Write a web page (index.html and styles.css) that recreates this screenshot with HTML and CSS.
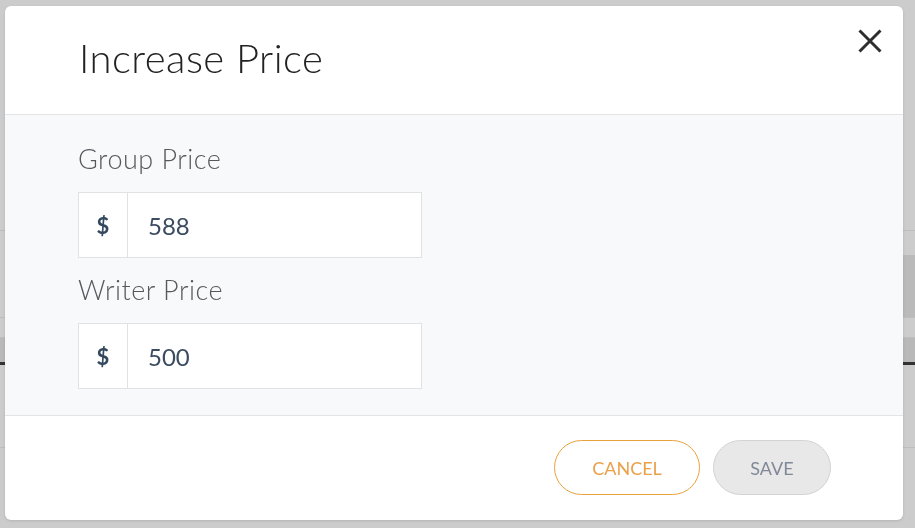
FILE: index.html
```html
<!DOCTYPE html>
<html lang="en">
<head>
<meta charset="utf-8">
<title>Increase Price</title>
<link rel="stylesheet" href="styles.css">
</head>
<body>
<div class="page">
  <div class="pg-gap pg-gap-a"></div>
  <div class="pg-line"></div>
  <div class="pg-gap pg-gap-b"></div>
  <div class="pg-row pg-row-tall"><div class="pg-cell-dark"></div></div>
  <div class="pg-line"></div>
  <div class="pg-gap pg-gap-c"></div>
  <div class="pg-line"></div>
  <div class="pg-band"></div>
  <div class="pg-dark"></div>
  <div class="pg-gap pg-gap-d"></div>
  <div class="pg-line"></div>
</div>

<div class="overlay">
  <div class="modal">
    <div class="modal-header">
      <h1 class="modal-title">Increase Price</h1>
      <button class="close-btn" aria-label="Close">
        <svg width="24" height="24" viewBox="0 0 24 24"><path d="M1.5 1.5 L22.5 22.5 M22.5 1.5 L1.5 22.5" stroke="#2e2e2e" stroke-width="3" fill="none"/></svg>
      </button>
    </div>
    <div class="modal-body">
      <div class="field">
        <label class="field-label">Group Price</label>
        <div class="input-group">
          <span class="addon">$</span>
          <span class="input-value">588</span>
        </div>
      </div>
      <div class="field">
        <label class="field-label">Writer Price</label>
        <div class="input-group">
          <span class="addon">$</span>
          <span class="input-value">500</span>
        </div>
      </div>
    </div>
    <div class="modal-footer">
      <button class="btn btn-cancel">CANCEL</button>
      <button class="btn btn-save">SAVE</button>
    </div>
  </div>
</div>
</body>
</html>
```

FILE: styles.css
```css
* { box-sizing: border-box; }
html, body { margin: 0; padding: 0; }
body {
  background: #cccccc;
  font-family: Lato, "Open Sans", sans-serif;
  width: 915px;
  height: 528px;
  overflow: hidden;
}

/* dimmed page underneath */
.page { display: flex; flex-direction: column; }
.pg-gap-a { height: 230px; }
.pg-line { height: 1px; background: #bdbdbd; }
.pg-gap-b { height: 24px; }
.pg-row { display: flex; justify-content: flex-end; }
.pg-row-tall { height: 62px; }
.pg-cell-dark { width: 20px; background: #bababa; }
.pg-gap-c { height: 19px; }
.pg-band { height: 24px; background: #b9b9b9; }
.pg-dark { height: 3px; background: #333333; }
.pg-gap-d { height: 82px; }

/* modal */
.overlay {
  position: fixed;
  inset: 0;
  display: flex;
  padding: 6px 12px 8px 5px;
}
.modal {
  flex: 1;
  display: flex;
  flex-direction: column;
  background: #ffffff;
  border-radius: 6px;
  overflow: hidden;
  box-shadow: 0 1px 3px rgba(0,0,0,0.12);
}
.modal-header {
  height: 109px;
  display: flex;
  align-items: flex-start;
  justify-content: space-between;
  padding: 28px 21px 0 74px;
  border-bottom: 1px solid #e3e4e6;
}
.modal-title {
  margin: 0;
  font-size: 40px;
  line-height: 48px;
  font-weight: 300;
  letter-spacing: 0.45px;
  color: #222222;
}
.close-btn {
  border: 0;
  background: none;
  padding: 0;
  margin-top: -5px;
  width: 24px;
  height: 24px;
  display: flex;
}

.modal-body {
  height: 301px;
  background: #f8f9fb;
  border-bottom: 1px solid #e3e4e6;
  padding: 27px 0 0 73px;
  display: flex;
  flex-direction: column;
  gap: 15px;
}
.field { display: flex; flex-direction: column; gap: 17px; }
.field-label {
  font-size: 27px;
  line-height: 33px;
  font-weight: 300;
  letter-spacing: 0.5px;
  color: #55595e;
}
.input-group {
  width: 344px;
  height: 66px;
  display: flex;
  background: #ffffff;
  border: 1px solid #e1e2e4;
}
.addon {
  width: 49px;
  border-right: 1px solid #e1e2e4;
  display: flex;
  align-items: center;
  justify-content: center;
  font-size: 22px;
  font-weight: 700;
  color: #34495e;
}
.input-value {
  display: flex;
  align-items: center;
  padding-left: 20px;
  font-size: 24px;
  color: #3b4c61;
}

.modal-footer {
  flex: 1;
  display: flex;
  justify-content: flex-end;
  align-items: flex-start;
  gap: 13px;
  padding: 24px 72px 0 0;
}
.btn {
  height: 55px;
  border-radius: 28px;
  font-family: Lato, "Open Sans", sans-serif;
  font-size: 18px;
  padding: 0;
}
.btn-cancel {
  width: 146px;
  background: #ffffff;
  border: 1px solid #e9a23b;
  color: #eba04a;
}
.btn-save {
  width: 118px;
  background: #e8e8e8;
  border: 1px solid #d3d3d3;
  color: #818999;
}
```
